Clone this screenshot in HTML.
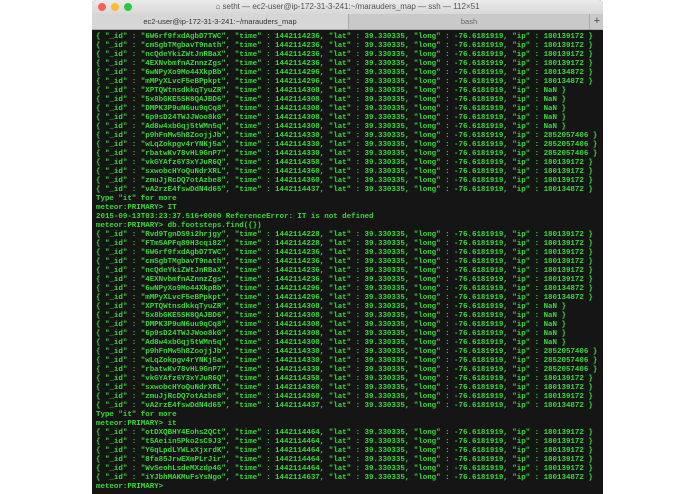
<!DOCTYPE html>
<html><head><style>
body{margin:0;width:695px;height:494px;background:#fff;position:relative;overflow:hidden;font-family:"Liberation Sans",sans-serif}
#win{position:absolute;left:92px;top:0;width:511px;height:494px;background:#151515;border-radius:4px 4px 0 0;overflow:hidden}
#title{position:absolute;left:0;top:0;width:511px;height:14px;background:linear-gradient(#ebebeb,#d8d8d8);font-size:8px;color:#555;text-align:center;line-height:14px}
.dot{position:absolute;top:3px;width:8px;height:8px;border-radius:50%}
#tabs{position:absolute;top:14px;left:0;width:511px;height:15px;background:#c9c9c9;border-bottom:1px solid #aaa;font-size:7.5px;color:#333;line-height:15px}
.tab{position:absolute;top:0;height:15px;text-align:center}
#term{position:absolute;left:4px;top:33px;font-family:"Liberation Mono",monospace;font-size:7.5px;letter-spacing:-0.025px;line-height:9px;color:#38d838;white-space:pre;font-weight:bold}
</style></head><body>
<div id="win">
<div id="title">
<div class="dot" style="left:6px;background:#fc5f57"></div>
<div class="dot" style="left:19px;background:#fdbc2e"></div>
<div class="dot" style="left:32px;background:#28c840"></div>
⌂ setht — ec2-user@ip-172-31-3-241:~/marauders_map — ssh — 112×51</div>
<div id="tabs">
<div class="tab" style="left:0;width:256px;background:#d6d6d6;border-right:1px solid #aaa">ec2-user@ip-172-31-3-241:~/marauders_map</div>
<div class="tab" style="left:257px;width:240px;color:#666">bash</div>
<div class="tab" style="left:497px;width:14px;font-size:11px;color:#444;border-left:1px solid #aaa">+</div>
</div>
<div id="term">{ "_id" : "6W6rf9fxdAgbD7TWC", "time" : 1442114236, "lat" : 39.330335, "long" : -76.6181919, "ip" : 180139172 }
{ "_id" : "cmSgbTMgbavT9nath", "time" : 1442114236, "lat" : 39.330335, "long" : -76.6181919, "ip" : 180139172 }
{ "_id" : "ncQdeYkiZWtJnRBaX", "time" : 1442114236, "lat" : 39.330335, "long" : -76.6181919, "ip" : 180139172 }
{ "_id" : "4EXNvbmfnAZnnzZgs", "time" : 1442114236, "lat" : 39.330335, "long" : -76.6181919, "ip" : 180139172 }
{ "_id" : "6wNPyXo9Mo44XkpBb", "time" : 1442114296, "lat" : 39.330335, "long" : -76.6181919, "ip" : 180134872 }
{ "_id" : "mMPyXLvcF5eBPpkpt", "time" : 1442114296, "lat" : 39.330335, "long" : -76.6181919, "ip" : 180134872 }
{ "_id" : "XPTQWtnsdkkqTyuZR", "time" : 1442114308, "lat" : 39.330335, "long" : -76.6181919, "ip" : NaN }
{ "_id" : "5x8bGKE5SH8QAJBD6", "time" : 1442114308, "lat" : 39.330335, "long" : -76.6181919, "ip" : NaN }
{ "_id" : "DMPK3P9uN6uu9qCq8", "time" : 1442114308, "lat" : 39.330335, "long" : -76.6181919, "ip" : NaN }
{ "_id" : "6p9sD24TWJJWoo8kG", "time" : 1442114308, "lat" : 39.330335, "long" : -76.6181919, "ip" : NaN }
{ "_id" : "Ad8w4xbGqj5tWMn5q", "time" : 1442114308, "lat" : 39.330335, "long" : -76.6181919, "ip" : NaN }
{ "_id" : "p9hFnMw5h8ZoojjJb", "time" : 1442114330, "lat" : 39.330335, "long" : -76.6181919, "ip" : 2852057406 }
{ "_id" : "wLqZokpgv4rYNKj5a", "time" : 1442114330, "lat" : 39.330335, "long" : -76.6181919, "ip" : 2852057406 }
{ "_id" : "rbatwKv78vHL9GnP7", "time" : 1442114330, "lat" : 39.330335, "long" : -76.6181919, "ip" : 2852057406 }
{ "_id" : "vkGYAfz6Y3xYJuR6Q", "time" : 1442114358, "lat" : 39.330335, "long" : -76.6181919, "ip" : 180139172 }
{ "_id" : "sxwobcHYoQuNdrXRL", "time" : 1442114360, "lat" : 39.330335, "long" : -76.6181919, "ip" : 180139172 }
{ "_id" : "zmuJjRcDQ7otAzbe8", "time" : 1442114360, "lat" : 39.330335, "long" : -76.6181919, "ip" : 180139172 }
{ "_id" : "vA2rzE4fswDdN4d65", "time" : 1442114437, "lat" : 39.330335, "long" : -76.6181919, "ip" : 180134872 }
Type "it" for more
meteor:PRIMARY&gt; IT
2015-09-13T03:23:37.516+0000 ReferenceError: IT is not defined
meteor:PRIMARY&gt; db.footsteps.find({})
{ "_id" : "Rvd9TgnDS9i2hrjgy", "time" : 1442114228, "lat" : 39.330335, "long" : -76.6181919, "ip" : 180139172 }
{ "_id" : "FTm5APFq89H3cqi82", "time" : 1442114228, "lat" : 39.330335, "long" : -76.6181919, "ip" : 180139172 }
{ "_id" : "6W6rf9fxdAgbD7TWC", "time" : 1442114236, "lat" : 39.330335, "long" : -76.6181919, "ip" : 180139172 }
{ "_id" : "cmSgbTMgbavT9nath", "time" : 1442114236, "lat" : 39.330335, "long" : -76.6181919, "ip" : 180139172 }
{ "_id" : "ncQdeYkiZWtJnRBaX", "time" : 1442114236, "lat" : 39.330335, "long" : -76.6181919, "ip" : 180139172 }
{ "_id" : "4EXNvbmfnAZnnzZgs", "time" : 1442114236, "lat" : 39.330335, "long" : -76.6181919, "ip" : 180139172 }
{ "_id" : "6wNPyXo9Mo44XkpBb", "time" : 1442114296, "lat" : 39.330335, "long" : -76.6181919, "ip" : 180134872 }
{ "_id" : "mMPyXLvcF5eBPpkpt", "time" : 1442114296, "lat" : 39.330335, "long" : -76.6181919, "ip" : 180134872 }
{ "_id" : "XPTQWtnsdkkqTyuZR", "time" : 1442114308, "lat" : 39.330335, "long" : -76.6181919, "ip" : NaN }
{ "_id" : "5x8bGKE5SH8QAJBD6", "time" : 1442114308, "lat" : 39.330335, "long" : -76.6181919, "ip" : NaN }
{ "_id" : "DMPK3P9uN6uu9qCq8", "time" : 1442114308, "lat" : 39.330335, "long" : -76.6181919, "ip" : NaN }
{ "_id" : "6p9sD24TWJJWoo8kG", "time" : 1442114308, "lat" : 39.330335, "long" : -76.6181919, "ip" : NaN }
{ "_id" : "Ad8w4xbGqj5tWMn5q", "time" : 1442114308, "lat" : 39.330335, "long" : -76.6181919, "ip" : NaN }
{ "_id" : "p9hFnMw5h8ZoojjJb", "time" : 1442114330, "lat" : 39.330335, "long" : -76.6181919, "ip" : 2852057406 }
{ "_id" : "wLqZokpgv4rYNKj5a", "time" : 1442114330, "lat" : 39.330335, "long" : -76.6181919, "ip" : 2852057406 }
{ "_id" : "rbatwKv78vHL9GnP7", "time" : 1442114330, "lat" : 39.330335, "long" : -76.6181919, "ip" : 2852057406 }
{ "_id" : "vkGYAfz6Y3xYJuR6Q", "time" : 1442114358, "lat" : 39.330335, "long" : -76.6181919, "ip" : 180139172 }
{ "_id" : "sxwobcHYoQuNdrXRL", "time" : 1442114360, "lat" : 39.330335, "long" : -76.6181919, "ip" : 180139172 }
{ "_id" : "zmuJjRcDQ7otAzbe8", "time" : 1442114360, "lat" : 39.330335, "long" : -76.6181919, "ip" : 180139172 }
{ "_id" : "vA2rzE4fswDdN4d65", "time" : 1442114437, "lat" : 39.330335, "long" : -76.6181919, "ip" : 180134872 }
Type "it" for more
meteor:PRIMARY&gt; it
{ "_id" : "otDXQBHY4Eohs2QCt", "time" : 1442114464, "lat" : 39.330335, "long" : -76.6181919, "ip" : 180139172 }
{ "_id" : "t5Aeiin5Pko2sC9J3", "time" : 1442114464, "lat" : 39.330335, "long" : -76.6181919, "ip" : 180139172 }
{ "_id" : "Y6qLpdLYWLxXjxrdK", "time" : 1442114464, "lat" : 39.330335, "long" : -76.6181919, "ip" : 180139172 }
{ "_id" : "8fa85JrwEXmPLrJir", "time" : 1442114464, "lat" : 39.330335, "long" : -76.6181919, "ip" : 180139172 }
{ "_id" : "WvSeohLsdeMXzdp4G", "time" : 1442114464, "lat" : 39.330335, "long" : -76.6181919, "ip" : 180139172 }
{ "_id" : "iYJbhMAKMuFsYsNgo", "time" : 1442114637, "lat" : 39.330335, "long" : -76.6181919, "ip" : 180134872 }
meteor:PRIMARY&gt;</div>
</div>
</body></html>
